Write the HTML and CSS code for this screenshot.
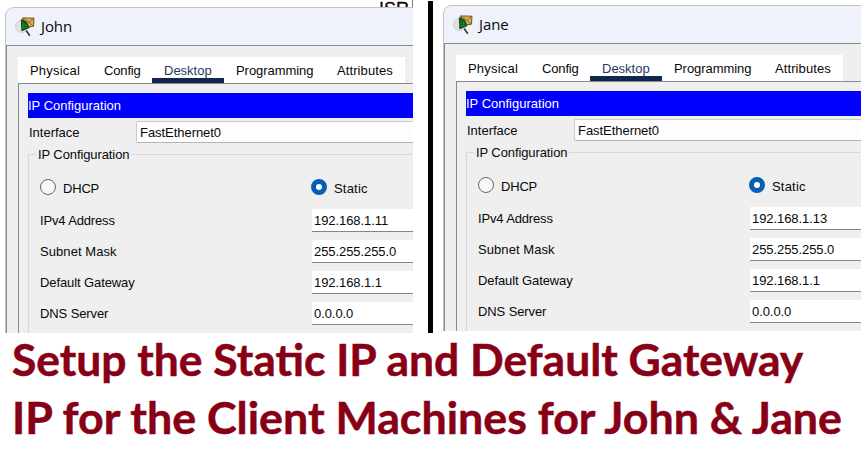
FILE: index.html
```html
<!DOCTYPE html>
<html lang="en">
<head>
<meta charset="utf-8">
<title>Static IP setup</title>
<link rel="stylesheet" href="styles.css">
</head>
<body>
<svg width="0" height="0" class="defs" aria-hidden="true">
  <symbol id="inspect" viewBox="0 0 20 20">
    <path d="M11 13.2 14.8 18.8" stroke="#333b3d" stroke-width="1.7" fill="none"/>
    <ellipse cx="6.5" cy="9.5" rx="6" ry="6" fill="#dfe3df" stroke="#c3c8c4" stroke-width=".7"/>
    <path d="M7.5 .9 19 1.2 18.5 9.2 11 10.5Z" fill="#dcae52" stroke="#604717" stroke-width=".9"/>
    <path d="M8.2 1.3 14 5.3 18.8 1.4M14 5.3 18 9" stroke="#765820" stroke-width=".7" fill="none"/>
    <path d="M6.3 2.5 11.6 5 14 10.8 6.8 13.8Z" fill="#0a5a1c" stroke="#123718" stroke-width=".8"/>
    <path d="M8.2 5v7M10.4 6.2v5.2M7 8l5 .6M7 10.7l6-.4" stroke="#2c9638" stroke-width=".6"/>
  </symbol>
</svg>
<main class="stage">
  <div class="column john">
    <div class="canvas-strip"><span>ISR</span></div>
    <section class="window">
      <header class="titlebar"><svg class="icon"><use href="#inspect"/></svg><span>John</span></header>
      <div class="body">
        <nav class="tabs"><span class="physical">Physical</span><span class="config">Config</span><span class="desktop">Desktop</span><span class="programming">Programming</span><span class="attributes">Attributes</span></nav>
        <div class="page">
          <h2>IP Configuration</h2>
          <div class="interface"><span>Interface</span><div class="combo">FastEthernet0</div></div>
          <fieldset>
            <legend>IP Configuration</legend>
            <div class="modes"><i class="radio"></i><span class="dhcp">DHCP</span><i class="radio on"></i><span class="static">Static</span></div>
            <div class="row"><span class="ipv4">IPv4 Address</span><div class="field">192.168.1.11</div></div>
            <div class="row"><span class="mask">Subnet Mask</span><div class="field">255.255.255.0</div></div>
            <div class="row"><span>Default Gateway</span><div class="field">192.168.1.1</div></div>
            <div class="row"><span>DNS Server</span><div class="field">0.0.0.0</div></div>
          </fieldset>
        </div>
      </div>
    </section>
  </div>
  <div class="divider"></div>
  <div class="column jane">
    <section class="window">
      <header class="titlebar"><svg class="icon"><use href="#inspect"/></svg><span>Jane</span></header>
      <div class="body">
        <nav class="tabs"><span class="physical">Physical</span><span class="config">Config</span><span class="desktop">Desktop</span><span class="programming">Programming</span><span class="attributes">Attributes</span></nav>
        <div class="page">
          <h2>IP Configuration</h2>
          <div class="interface"><span>Interface</span><div class="combo">FastEthernet0</div></div>
          <fieldset>
            <legend>IP Configuration</legend>
            <div class="modes"><i class="radio"></i><span class="dhcp">DHCP</span><i class="radio on"></i><span class="static">Static</span></div>
            <div class="row"><span class="ipv4">IPv4 Address</span><div class="field">192.168.1.13</div></div>
            <div class="row"><span class="mask">Subnet Mask</span><div class="field">255.255.255.0</div></div>
            <div class="row"><span>Default Gateway</span><div class="field">192.168.1.1</div></div>
            <div class="row"><span>DNS Server</span><div class="field">0.0.0.0</div></div>
          </fieldset>
        </div>
      </div>
    </section>
  </div>
</main>
<h1><span class="line-one">Setup the Static IP and Default Gateway</span><span class="line-two">IP for the Client Machines for John &amp; Jane</span></h1>
</body>
</html>
```
FILE: styles.css
```css
* { box-sizing: border-box; }
body {
  margin: 0;
  width: 866px;
  height: 453px;
  overflow: hidden;
  background: #fff;
  color: #080808;
  font: 13px/18px "Liberation Sans", Arial, sans-serif;
}
.defs { display: block; }
.stage { display: flex; height: 333px; padding-left: 5px; }
.column { flex: none; }
.john { width: 408px; }
.jane { width: 418px; margin-left: 10px; padding-top: 5px; height: 331px; overflow: hidden; }
.divider { width: 5px; margin: 1px 0 0 15px; background: #000; }
.canvas-strip {
  height: 7px;
  overflow: hidden;
  border-right: 1px solid #777;
  padding-left: 374px;
  font-size: 18px;
  line-height: 14px;
}
.canvas-strip span { display: block; padding-top: 2px; -webkit-text-stroke: .3px #080808; }
.window {
  height: 326px;
  overflow: hidden;
  border: solid #c1c2c5;
  border-width: 1px 0 0 1px;
  border-radius: 9px 0 0 0;
  background: #eff2fa;
}
.titlebar {
  display: flex;
  align-items: center;
  height: 37px;
  padding-left: 9px;
  gap: 6px;
  font: 15px/20px "Open Sans", "Noto Sans", sans-serif;
}
.titlebar .icon { width: 20px; height: 20px; }
.titlebar span { letter-spacing: -.1px; padding-bottom: 2px; }
.body {
  height: 288px;
  background: #efefef;
  border: solid #858991;
  border-width: 1px 0 0 1px;
  padding: 11px 0 0 11px;
}
.tabs { display: flex; width: 387px; height: 26px; background: #fff; line-height: 27px; }
.tabs span { flex: none; white-space: nowrap; }
.physical { width: 74px; padding-left: 12px; letter-spacing: .2px; }
.config { width: 60px; padding-left: 12px; letter-spacing: -.15px; }
.desktop { width: 72px; padding-left: 12px; color: #24385f; border-bottom: 5px solid #10264a; }
.programming { width: 101px; padding-left: 12px; letter-spacing: -.05px; }
.attributes { padding-left: 12px; letter-spacing: .1px; }
.page {
  height: 250px;
  border: solid #858991;
  border-width: 1px 0 0 1px;
  padding: 9px 0 0 9px;
}
h2 {
  height: 25px;
  margin: 0;
  background: #0000fe;
  color: #fff;
  font: 13px/25px "Liberation Sans", Arial, sans-serif;
}
.interface { display: flex; height: 25px; padding-top: 3px; line-height: 24px; }
.interface span { width: 108px; padding-left: 1px; }
.combo {
  flex: 1;
  height: 22px;
  padding-left: 3px;
  line-height: 21px;
  background: #fdfdfd;
  border: 1px solid #cbcbcb;
  border-bottom-color: #b4b4b4;
  border-right: 0;
  border-radius: 2px 0 0 2px;
  letter-spacing: -.05px;
}
fieldset {
  min-width: 0;
  height: 200px;
  margin: 2px 0 0;
  padding: 0 0 0 11px;
  border: solid #d9d9d9;
  border-width: 1px 0 0 1px;
}
legend { height: 18px; margin-left: -4px; padding: 0 2px; line-height: 20px; letter-spacing: -.1px; }
.modes { display: flex; align-items: center; height: 30px; margin: 9px 0 7px; line-height: 20px; }
.modes span { padding-top: 3px; }
.radio { flex: none; width: 16px; height: 16px; border: 1px solid #666; border-radius: 50%; background: #f7f7f7; }
.radio.on { border: 5px solid #075fb5; background: #fff; }
.dhcp { width: 255px; padding-left: 7px; letter-spacing: -.2px; }
.static { padding-left: 7px; letter-spacing: .2px; }
.row { display: flex; height: 23px; margin-bottom: 8px; line-height: 23px; }
.row span { width: 272px; letter-spacing: -.1px; }
.row .ipv4 { letter-spacing: -.15px; }
.row .mask { letter-spacing: .07px; }
.field { flex: 1; padding-left: 2px; background: #fff; border-bottom: 1px solid #858585; letter-spacing: -.07px; }
h1 {
  display: flex;
  flex-direction: column;
  margin: -3px 0 0;
  padding-left: 12px;
  color: #870016;
  font: 700 44.4px/58px Lato, sans-serif;
  white-space: nowrap;
  -webkit-text-stroke: .5px #870016;
}
.line-two { font-size: 44.75px; }
```
